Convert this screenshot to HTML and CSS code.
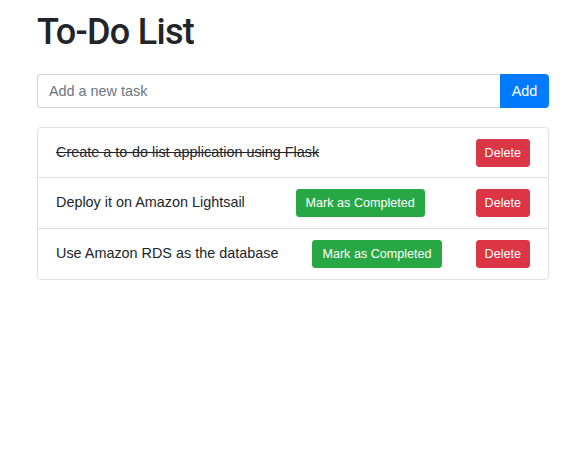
FILE: index.html
```html
<!DOCTYPE html>
<html lang="en">
<head>
<meta charset="utf-8">
<title>To-Do List</title>
<link rel="stylesheet" href="styles.css">
</head>
<body>
<div class="container">
  <h1 class="title">To-Do List</h1>
  <form class="add-form">
    <input class="task-input" type="text" placeholder="Add a new task">
    <button class="btn btn-add" type="button">Add</button>
  </form>
  <ul class="task-list">
    <li class="task-item">
      <span class="task-text done">Create a to-do list application using Flask</span>
      <button class="btn btn-sm btn-delete" type="button">Delete</button>
    </li>
    <li class="task-item">
      <span class="task-text">Deploy it on Amazon Lightsail</span>
      <button class="btn btn-sm btn-complete" type="button">Mark as Completed</button>
      <button class="btn btn-sm btn-delete" type="button">Delete</button>
    </li>
    <li class="task-item">
      <span class="task-text">Use Amazon RDS as the database</span>
      <button class="btn btn-sm btn-complete" type="button">Mark as Completed</button>
      <button class="btn btn-sm btn-delete" type="button">Delete</button>
    </li>
  </ul>
</div>
</body>
</html>
```
FILE: styles.css
```css
* { box-sizing: border-box; }

body {
  margin: 0;
  background: #fff;
  color: #212529;
  font-family: "Liberation Sans", Arial, sans-serif;
  font-size: 14.4px;
  line-height: 1.5;
}

.container {
  width: 512px;
  margin: 0 auto;
  padding-top: 11px;
}

.title {
  margin: 0 0 20px;
  font-family: Roboto, "Liberation Sans", Arial, sans-serif;
  font-size: 36px;
  font-weight: 500;
  line-height: 43px;
  letter-spacing: -0.7px;
  color: #212529;
}

.add-form {
  display: flex;
  height: 34px;
  margin: 0;
}

.task-input {
  flex: 1;
  min-width: 0;
  height: 34px;
  padding: 5px 11px;
  border: 1px solid #ced4da;
  border-right: none;
  border-radius: 3.6px 0 0 3.6px;
  font-family: inherit;
  font-size: 14.4px;
  color: #495057;
  outline: none;
}

.task-input::placeholder { color: #6c757d; opacity: 1; }

.btn {
  font-family: inherit;
  border: 1px solid transparent;
  color: #fff;
  cursor: pointer;
  white-space: nowrap;
}

.btn-add {
  width: 49px;
  height: 34px;
  padding: 0;
  background: #007bff;
  border-color: #007bff;
  border-radius: 0 3.6px 3.6px 0;
  font-size: 14.4px;
}

.task-list {
  list-style: none;
  margin: 19px 0 0;
  padding: 0;
  border: 1px solid #dfdfdf;
  border-radius: 3.6px;
}

.task-item {
  display: flex;
  align-items: center;
  justify-content: space-between;
  height: 51px;
  padding: 0 18px;
  border-top: 1px solid #dfdfdf;
}

.task-item:first-child { border-top: none; height: 49px; }

.task-text { font-size: 14.4px; }

.task-text.done { text-decoration: line-through; }

.btn-sm {
  height: 28px;
  padding: 0 8px;
  font-size: 12.6px;
  border-radius: 2.9px;
}

.btn-complete {
  padding: 0 9px;
  background: #28a745;
  border-color: #28a745;
}

.btn-delete {
  background: #dc3545;
  border-color: #dc3545;
}
```
